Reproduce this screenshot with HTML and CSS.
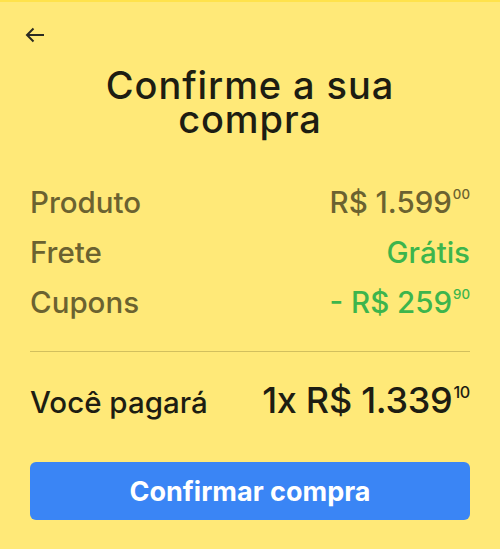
FILE: index.html
```html
<!DOCTYPE html>
<html lang="pt-BR">
<head>
<meta charset="utf-8">
<link rel="stylesheet" href="styles.css">
</head>
<body>
<div class="screen">
  <div class="topbar">
    <button class="back" aria-label="Voltar">
      <svg width="20" height="16" viewBox="0 0 20 16"><path d="M19 8H2M8.5 1.5L2 8l6.5 6.5" fill="none" stroke="#2b2b22" stroke-width="2"/></svg>
    </button>
  </div>
  <h1 class="title">Confirme a sua<br>compra</h1>
  <div class="summary">
    <div class="row"><span class="label">Produto</span><span class="value">R$ 1.599<sup>00</sup></span></div>
    <div class="row"><span class="label">Frete</span><span class="value green">Grátis</span></div>
    <div class="row"><span class="label">Cupons</span><span class="value green">- R$ 259<sup>90</sup></span></div>
  </div>
  <hr class="divider">
  <div class="total">
    <span class="total-label">Você pagará</span>
    <span class="total-value">1x R$ 1.339<sup>10</sup></span>
  </div>
  <button class="confirm">Confirmar compra</button>
</div>
</body>
</html>
```
FILE: styles.css
```css
* { box-sizing: border-box; }
html, body { margin: 0; padding: 0; }
body {
  background: #ffe978;
  font-family: Inter, "Noto Sans", sans-serif;
  width: 500px;
  height: 549px;
  overflow: hidden;
}
.screen {
  border-top: 2px solid #ffe24c;
  padding: 0 30px;
}
.topbar {
  height: 66px;
  display: flex;
  align-items: center;
}
.back {
  background: none;
  border: 0;
  padding: 0;
  margin-left: -5px;
  display: flex;
}
.title {
  margin: 0;
  text-align: center;
  font-size: 38px;
  line-height: 34px;
  font-weight: 500;
  letter-spacing: 0.9px;
  color: #1d1d12;
}
.summary {
  margin-top: 41px;
  display: flex;
  flex-direction: column;
}
.row {
  display: flex;
  justify-content: space-between;
  align-items: baseline;
  height: 50px;
  line-height: 50px;
  font-size: 29.5px;
  font-weight: 500;
  color: #6b6230;
}
.value sup, .total-value sup {
  font-size: 0.45em;
  line-height: 1;
  vertical-align: top;
  position: relative;
  margin-left: 1px;
}
.value sup { top: 11px; }
.total-value sup { top: 6px; }
.green { color: #3db54c; }
.divider {
  border: 0;
  height: 1px;
  background: #d2bf5e;
  margin: 24px 0 0;
}
.total {
  display: flex;
  justify-content: space-between;
  align-items: baseline;
  margin-top: 26px;
  height: 44px;
  line-height: 44px;
  color: #1d1d12;
  font-weight: 500;
}
.total-label { font-size: 29.5px; }
.total-value { font-size: 36px; letter-spacing: -0.3px; }
.confirm {
  display: block;
  width: 100%;
  margin-top: 40px;
  height: 58px;
  border: 0;
  border-radius: 6px;
  background: #3a85f5;
  color: #fff;
  font-family: Inter, "Noto Sans", sans-serif;
  font-size: 27px;
  font-weight: 700;
}
```
